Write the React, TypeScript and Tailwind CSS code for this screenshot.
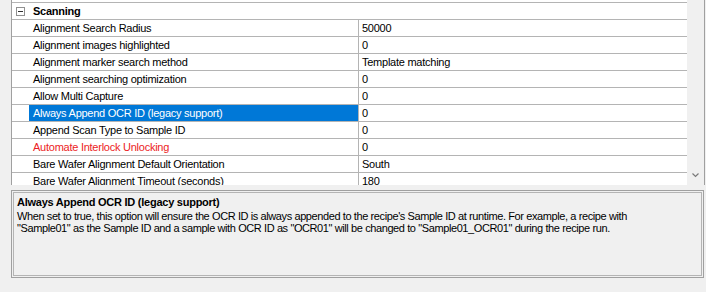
import type React from "react";

type PropRow = {
	name: string;
	value: string;
	selected?: boolean;
	warn?: boolean;
};

const rows: PropRow[] = [
	{ name: "Alignment Search Radius", value: "50000" },
	{ name: "Alignment images highlighted", value: "0" },
	{ name: "Alignment marker search method", value: "Template matching" },
	{ name: "Alignment searching optimization", value: "0" },
	{ name: "Allow Multi Capture", value: "0" },
	{ name: "Always Append OCR ID (legacy support)", value: "0", selected: true },
	{ name: "Append Scan Type to Sample ID", value: "0" },
	{ name: "Automate Interlock Unlocking", value: "0", warn: true },
	{ name: "Bare Wafer Alignment Default Orientation", value: "South" },
	{ name: "Bare Wafer Alignment Timeout (seconds)", value: "180" },
];

const font = "font-['Liberation_Sans',Arial,sans-serif] text-[11px] tracking-[-0.25px]";

const App: React.FC = () => {
	return (
		<div className={`w-[706px] h-[292px] bg-[#f0f0f0] overflow-hidden text-black ${font}`}>
			{/* property grid */}
			<div className="flex h-[185px]">
				<div className="w-[11px] shrink-0" />
				<div className="flex w-[694px] border-x border-[#a0a0a0] overflow-hidden">
					<div className="w-[675px] bg-white overflow-hidden">
						<div className="h-[2px]" />
						{/* category */}
						<div className="flex items-center h-[18px] border-y border-[#b4b4b4] leading-[16px]">
							<div className="w-[17px] flex justify-end pr-[4px]">
								<div className="w-[9px] h-[9px] border border-[#909090] flex items-center justify-center">
									<div className="w-[5px] h-px bg-[#303030]" />
								</div>
							</div>
							<span className="pl-[4px] font-bold">Scanning</span>
						</div>
						{rows.map((row) => (
							<div
								key={row.name}
								className="flex h-[17px] border-b border-[#b4b4b4] leading-[16px]"
							>
								<div className="w-[17px] shrink-0" />
								<div
									className={`w-[329px] shrink-0 pl-[4px] whitespace-nowrap ${
										row.selected ? "bg-[#0078d7] text-white" : ""
									} ${row.warn ? "text-[#ec1c24]" : ""}`}
								>
									{row.name}
								</div>
								<div className="w-px bg-[#b4b4b4] shrink-0" />
								<div className="pl-[3px] whitespace-nowrap">{row.value}</div>
							</div>
						))}
					</div>
					{/* scrollbar */}
					<div className="w-[17px] bg-[#f0f0f0] flex flex-col justify-end">
						<div className="h-[17px] flex items-start justify-center pt-[5px]">
							<svg width="7" height="5" viewBox="0 0 7 5">
								<path d="M0.5 0.5 L3.5 3.5 L6.5 0.5" fill="none" stroke="#7a7a7a" strokeWidth="1.2" />
							</svg>
						</div>
					</div>
				</div>
			</div>

			{/* help panel */}
			<div className="ml-[11px] mt-[5px] w-[693px] h-[88px] border border-[#a0a0a0] p-px">
				<div className="h-full border border-[#b4b4b4] pl-[3px]">
					<div className="font-bold leading-[14px] mt-[2px]">
						Always Append OCR ID (legacy support)
					</div>
					<div className="leading-[12px] mt-px whitespace-nowrap tracking-[-0.4px]">
						When set to true, this option will ensure the OCR ID is always
						appended to the recipe's Sample ID at runtime. For example, a recipe
						with
						<br />
						"Sample01" as the Sample ID and a sample with OCR ID as "OCR01" will
						be changed to "Sample01_OCR01" during the recipe run.
					</div>
				</div>
			</div>
		</div>
	);
};

export default App;
